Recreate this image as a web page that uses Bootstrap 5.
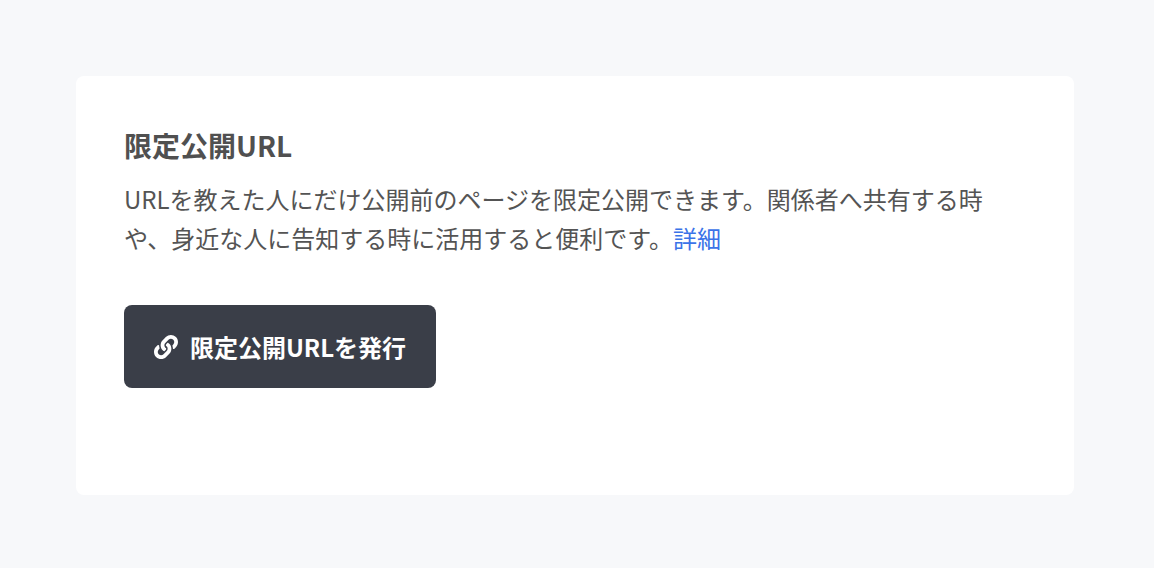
<!DOCTYPE html>
<html lang="ja">
<head>
<meta charset="utf-8">
<link href="https://cdn.jsdelivr.net/npm/bootstrap@5.3.0/dist/css/bootstrap.min.css" rel="stylesheet">
<style>
html,body{height:100%}
body{background:#f7f8fa;font-family:"Noto Sans CJK JP","Noto Sans",sans-serif;color:#4a4a4a;overflow:hidden}
.page-wrap{padding:76px 80px 73px 76px}
.panel-box{background:#fff;border-radius:8px;height:419px;padding:48px}
.panel-title{font-size:28px;font-weight:700;line-height:42px;margin:0 0 13px;color:#505050}
.panel-text{font-size:24px;line-height:39px;margin:0 0 48px;max-width:870px;color:#545454}
.panel-text a{color:#3b73e8;text-decoration:none}
.issue-btn{background:#3a3e48;color:#fff;border:0;border-radius:8px;width:312px;height:83px;font-size:24px;font-weight:700;gap:12px}
.issue-btn:hover{background:#3a3e48;color:#fff}
</style>
</head>
<body>
<div class="page-wrap">
<div class="panel-box">
<h2 class="panel-title">限定公開URL</h2>
<p class="panel-text">URLを教えた人にだけ公開前のページを限定公開できます。関係者へ共有する時や、身近な人に告知する時に活用すると便利です。<a href="#">詳細</a></p>
<button class="btn issue-btn d-inline-flex align-items-center justify-content-center" type="button">
<svg width="24" height="24" viewBox="0 0 512 512" fill="#fff"><path d="M326.612 185.391c59.747 59.809 58.927 155.698.36 214.59-.11.12-.24.25-.36.37l-67.2 67.2c-59.27 59.27-155.699 59.262-214.96 0-59.27-59.26-59.27-155.7 0-214.96l37.106-37.106c9.84-9.84 26.786-3.3 27.294 10.606.648 17.722 3.826 35.527 9.69 52.721 1.986 5.822.567 12.262-3.783 16.612l-13.087 13.087c-28.026 28.026-28.905 73.66-1.155 101.96 28.024 28.579 74.086 28.749 102.325.51l67.2-67.19c28.191-28.191 28.073-73.757 0-101.83-3.701-3.694-7.429-6.564-10.341-8.569a16.037 16.037 0 0 1-6.947-12.606c-.396-10.567 3.348-21.456 11.698-29.806l21.054-21.055c5.521-5.521 14.182-6.199 20.584-1.731a152.482 152.482 0 0 1 20.522 17.197zM467.547 44.449c-59.261-59.262-155.69-59.27-214.96 0l-67.2 67.2c-.12.12-.25.25-.36.37-58.566 58.892-59.387 154.781.36 214.59a152.454 152.454 0 0 0 20.521 17.196c6.402 4.468 15.064 3.789 20.584-1.731l21.054-21.055c8.35-8.35 12.094-19.239 11.698-29.806a16.037 16.037 0 0 0-6.947-12.606c-2.912-2.005-6.64-4.875-10.341-8.569-28.073-28.073-28.191-73.639 0-101.83l67.2-67.19c28.239-28.239 74.3-28.069 102.325.51 27.75 28.3 26.872 73.934-1.155 101.96l-13.087 13.087c-4.35 4.35-5.769 10.79-3.783 16.612 5.864 17.194 9.042 34.999 9.69 52.721.509 13.906 17.454 20.446 27.294 10.606l37.106-37.106c59.271-59.259 59.271-155.699.001-214.959z"/></svg>
<span>限定公開URLを発行</span>
</button>
</div>
</div>
<script src="https://cdn.jsdelivr.net/npm/bootstrap@5.3.0/dist/js/bootstrap.bundle.min.js"></script>
</body>
</html>
